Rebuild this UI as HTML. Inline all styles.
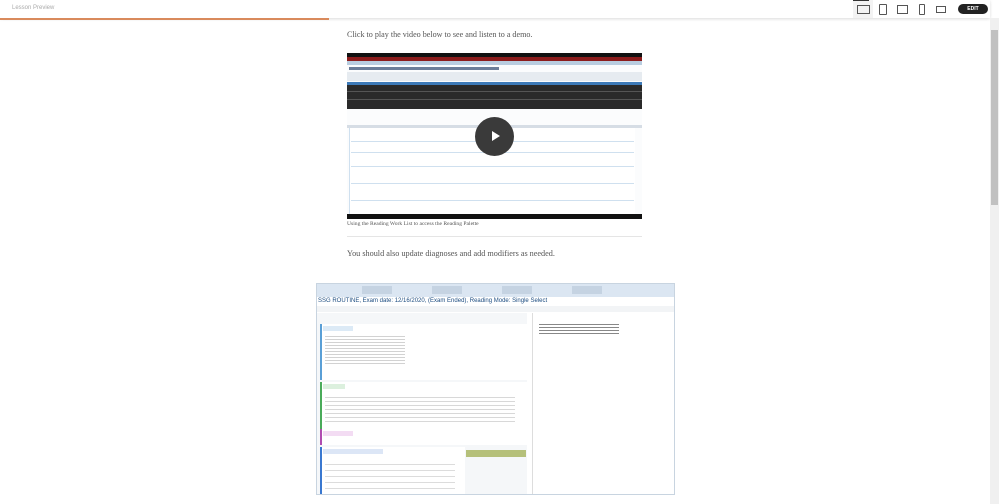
<!DOCTYPE html>
<html><head><meta charset="utf-8"><style>
body{margin:0;width:999px;height:504px;overflow:hidden;background:#fff;font-family:"Liberation Serif",serif;position:relative}
.a{position:absolute}
.hdr{left:0;top:0;width:990px;height:18px;background:#fff;box-shadow:0 1px 3px rgba(0,0,0,.15)}
.t{font-size:7.5px;color:#444}
</style></head><body>
<div class="a hdr"></div>
<div class="a" style="left:12px;top:5px;font-family:'Liberation Sans',sans-serif;font-size:6px;color:#aaa">Lesson Preview</div>
<div class="a" style="left:0;top:18px;width:329px;height:2px;background:#d98a5c"></div>
<div class="a" style="left:853px;top:0;width:20px;height:18px;background:#f3f3f3"></div>
<div class="a" style="left:853px;top:0;width:16px;height:1px;background:#333"></div>
<div class="a" style="left:857px;top:5px;width:11px;height:7px;border:1px solid #555"></div>
<div class="a" style="left:879px;top:4px;width:6px;height:9px;border:1px solid #555;border-radius:1px"></div>
<div class="a" style="left:897px;top:5px;width:9px;height:7px;border:1px solid #555"></div>
<div class="a" style="left:919px;top:4px;width:4px;height:9px;border:1px solid #555;border-radius:1px"></div>
<div class="a" style="left:936px;top:6px;width:8px;height:5px;border:1px solid #555"></div>
<div class="a" style="left:958px;top:4px;width:30px;height:10px;background:#222;border-radius:6px;color:#fff;font-family:'Liberation Sans',sans-serif;font-size:5px;font-weight:bold;text-align:center;line-height:10px">EDIT</div>
<div class="a" style="left:990px;top:18px;width:9px;height:486px;background:#f0f0f0"></div>
<div class="a" style="left:991px;top:30px;width:7px;height:175px;background:#c1c1c1"></div>

<div class="a t" style="left:347px;top:30px;font-size:8.1px;color:#555">Click to play the video below to see and listen to a demo.</div>

<div class="a" style="left:347px;top:53px;width:295px;height:166px;background:#fbfcfd;overflow:hidden">
 <div class="a" style="left:0;top:0;width:295px;height:4px;background:#111"></div>
 <div class="a" style="left:0;top:4px;width:295px;height:4px;background:#8c1c1c"></div>
 <div class="a" style="left:0;top:8px;width:295px;height:4px;background:#b9cde0"></div>
 <div class="a" style="left:2px;top:14px;width:150px;height:3px;background:#6b7d99"></div>
 <div class="a" style="left:0;top:19px;width:295px;height:9px;background:#e6ebf0"></div>
 <div class="a" style="left:0;top:29px;width:295px;height:27px;background:#2a2a2a"></div>
 <div class="a" style="left:0;top:29px;width:295px;height:3px;background:#3d7ab8"></div>
 <div class="a" style="left:0;top:38px;width:295px;height:1px;background:#555"></div>
 <div class="a" style="left:0;top:46px;width:295px;height:1px;background:#555"></div>
 <div class="a" style="left:0;top:72px;width:295px;height:3px;background:#d6dde5"></div>
 <div class="a" style="left:2px;top:75px;width:285px;height:86px;background:#fff;border-left:1px solid #cfe0ef"></div>
 <div class="a" style="left:4px;top:88px;width:283px;height:1px;background:#cfe0ef"></div>
 <div class="a" style="left:4px;top:99px;width:283px;height:1px;background:#cfe0ef"></div>
 <div class="a" style="left:4px;top:113px;width:283px;height:1px;background:#cfe0ef"></div>
 <div class="a" style="left:4px;top:130px;width:283px;height:1px;background:#cfe0ef"></div>
 <div class="a" style="left:4px;top:147px;width:283px;height:1px;background:#cfe0ef"></div>
 <div class="a" style="left:0;top:161px;width:295px;height:5px;background:#111"></div>
 <div class="a" style="left:128px;top:64px;width:39px;height:39px;border-radius:50%;background:#3a3a3a"></div>
 <div class="a" style="left:145px;top:78px;width:0;height:0;border-left:8px solid #fff;border-top:5px solid transparent;border-bottom:5px solid transparent"></div>
</div>
<div class="a" style="left:347px;top:221px;font-size:5.6px;color:#555">Using the Reading Work List to access the Reading Palette</div>
<div class="a" style="left:347px;top:236px;width:295px;height:1px;background:#e5e5e5"></div>

<div class="a t" style="left:347px;top:249px;font-size:8.2px;color:#555">You should also update diagnoses and add modifiers as needed.</div>

<div class="a" style="left:316px;top:283px;width:359px;height:212px;background:#fff;border:1px solid #c8d4e0;box-sizing:border-box;overflow:hidden">
 <div class="a" style="left:0;top:0;width:359px;height:13px;background:#dbe6f2"></div>
 <div class="a" style="left:5px;top:2px;width:300px;height:8px;background:repeating-linear-gradient(90deg,transparent 0 40px,#c5d3e2 40px 70px)"></div>
 <div class="a" style="left:1px;top:14px;font-family:'Liberation Sans',sans-serif;font-size:6px;color:#1c4c80">SSG ROUTINE, Exam date: 12/16/2020, (Exam Ended), Reading Mode: Single Select</div>
 <div class="a" style="left:0;top:22px;width:359px;height:6px;background:#f2f4f6"></div>
 <div class="a" style="left:0;top:29px;width:210px;height:183px;background:#f5f7f9"></div>
 <div class="a" style="left:3px;top:40px;width:205px;height:56px;background:#fff;border-left:2px solid #5a9fd6"></div>
 <div class="a" style="left:3px;top:98px;width:205px;height:56px;background:#fff;border-left:2px solid #4aab5a"></div>
 <div class="a" style="left:3px;top:145px;width:205px;height:16px;background:#fff;border-left:2px solid #b04cb0"></div>
 <div class="a" style="left:3px;top:163px;width:143px;height:49px;background:#fff;border-left:2px solid #3a78d0"></div>
 <div class="a" style="left:149px;top:166px;width:60px;height:7px;background:#b5c07a"></div>
 <div class="a" style="left:6px;top:42px;width:30px;height:5px;background:#dceaf6"></div>
 <div class="a" style="left:6px;top:100px;width:22px;height:5px;background:#dcf0de"></div>
 <div class="a" style="left:6px;top:147px;width:30px;height:5px;background:#f3dcf3"></div>
 <div class="a" style="left:6px;top:165px;width:60px;height:5px;background:#dce6f6"></div>
 <div class="a" style="left:8px;top:50px;width:80px;height:30px;background:repeating-linear-gradient(#fff 0 2px,#d2d2d2 2px 3px)"></div>
 <div class="a" style="left:8px;top:110px;width:190px;height:30px;background:repeating-linear-gradient(#fff 0 3px,#d8d8d8 3px 4px)"></div>
 <div class="a" style="left:8px;top:175px;width:130px;height:35px;background:repeating-linear-gradient(#fff 0 5px,#dcdcdc 5px 6px)"></div>
 <div class="a" style="left:215px;top:29px;width:143px;height:183px;background:#fff;border-left:1px solid #ddd"></div>
 <div class="a" style="left:222px;top:38px;width:80px;height:12px;background:repeating-linear-gradient(#fff 0 2px,#888 2px 3px)"></div>
</div>
</body></html>
